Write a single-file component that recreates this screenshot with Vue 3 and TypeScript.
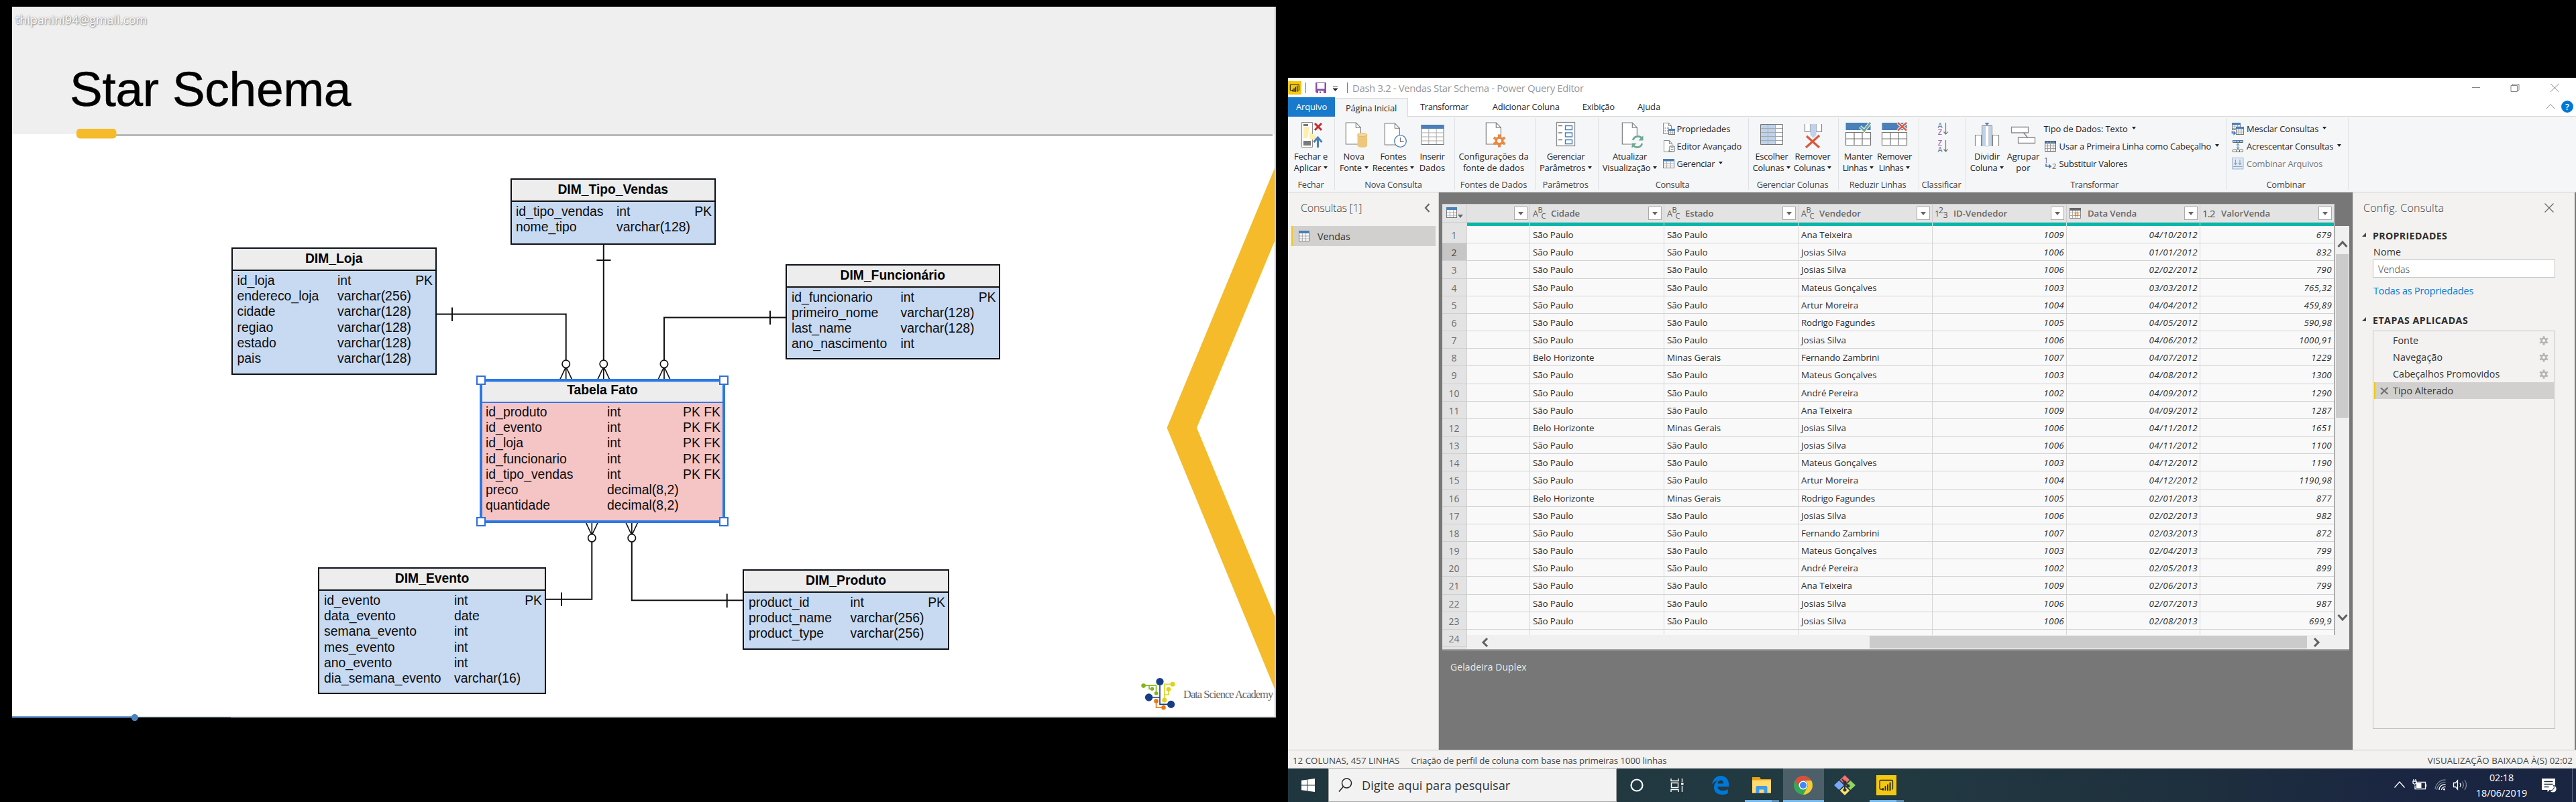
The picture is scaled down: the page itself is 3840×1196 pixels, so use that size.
<script setup lang="ts">
interface Field { name: string; type: string; key?: string }
interface Entity { title: string; x: number; y: number; w: number; h: number; col: number; pad: number; fact?: boolean; fields: Field[] }
interface Item { icon?: string; text: string; w: number; caret?: boolean; off?: boolean; iw?: number }
interface Btn { icon: string; w: number; ml: number; a: string; aw: number; b: string; bw: number; caret?: boolean }
interface Group { w: number; label: string; lw: number; lc: number; btns: Btn[]; items?: Item[]; iml?: number; sort?: boolean }

// Spreads the letters of a text so that it takes the given width.
const vFit = {
  mounted(el: HTMLElement, binding: { value?: number }) {
    const n = (el.textContent || '').length
    if (!binding.value || n < 2) return
    const natural = el.getBoundingClientRect().width
    el.style.letterSpacing = ((binding.value + 1.2 - natural) / n).toFixed(3) + 'px'
  },
}

const f = (name: string, type: string, key = ''): Field => ({ name, type, key })

const entities: Entity[] = [
  { title: 'DIM_Tipo_Vendas', x: 760.5, y: 266, w: 306.5, h: 98.5, col: 150, pad: 6.5, fields: [f('id_tipo_vendas', 'int', 'PK'), f('nome_tipo', 'varchar(128)')] },
  { title: 'DIM_Loja', x: 344.5, y: 369, w: 306.5, h: 189.5, col: 149.5, pad: 7, fields: [f('id_loja', 'int', 'PK'), f('endereco_loja', 'varchar(256)'), f('cidade', 'varchar(128)'), f('regiao', 'varchar(128)'), f('estado', 'varchar(128)'), f('pais', 'varchar(128)')] },
  { title: 'DIM_Funcionário', x: 1171, y: 393.5, w: 319.5, h: 142, col: 162.5, pad: 7, fields: [f('id_funcionario', 'int', 'PK'), f('primeiro_nome', 'varchar(128)'), f('last_name', 'varchar(128)'), f('ano_nascimento', 'int')] },
  { title: 'Tabela Fato', x: 715, y: 565, w: 366, h: 215, col: 181, pad: 5, fact: true, fields: [f('id_produto', 'int', 'PK FK'), f('id_evento', 'int', 'PK FK'), f('id_loja', 'int', 'PK FK'), f('id_funcionario', 'int', 'PK FK'), f('id_tipo_vendas', 'int', 'PK FK'), f('preco', 'decimal(8,2)'), f('quantidade', 'decimal(8,2)')] },
  { title: 'DIM_Evento', x: 474, y: 846, w: 340, h: 189, col: 194, pad: 7, fields: [f('id_evento', 'int', 'PK'), f('data_evento', 'date'), f('semana_evento', 'int'), f('mes_evento', 'int'), f('ano_evento', 'int'), f('dia_semana_evento', 'varchar(16)')] },
  { title: 'DIM_Produto', x: 1107, y: 849, w: 308, h: 120, col: 151.5, pad: 7, fields: [f('product_id', 'int', 'PK'), f('product_name', 'varchar(256)'), f('product_type', 'varchar(256)')] },
]
const handles = [[717, 567], [1079, 567], [717, 778], [1079, 778]]
const feetTop = [843.7, 899.8, 990]
const feetBottom = [882.3, 941.8]

const doc = '<path d="M1.5 2.5h17l8 9v31h-25z" fill="#fff" stroke="#7a7a7a" stroke-width="1.3"/><path d="M18.5 2.5v9h8" fill="none" stroke="#7a7a7a" stroke-width="1.3"/>'
const gear = (x: number, y: number, s: number, c: string) =>
  `<g transform="translate(${x} ${y}) scale(${s})"><g fill="${c}"><circle r="6.6"/>${[0, 60, 120, 180, 240, 300].map(a => `<rect x="-2" y="-9.6" width="4" height="5" transform="rotate(${a})"/>`).join('')}</g><circle r="3" fill="#f5f6f8"/></g>`
const sheet = (x: number, y: number, w: number, h: number, cols: number, rows: number, head: number) => {
  let s = `<rect x="${x + .5}" y="${y + .5}" width="${w - 1}" height="${h - 1}" fill="#fff" stroke="#777"/>`
  let d = ''
  for (let i = 1; i < cols; i++) d += `M${x + (w / cols) * i} ${y + head}v${h - head - 1}`
  for (let i = 1; i < rows; i++) d += `M${x + 1} ${y + head + ((h - head) / rows) * i}h${w - 2}`
  return s + `<path d="${d}" stroke="#a9a9a9" fill="none"/><rect x="${x}" y="${y}" width="${w}" height="${head}" fill="#4a7fb8"/>`
}
const docAt = (x: number, y: number) => `<g transform="translate(${x} ${y}) scale(.88 .8)">${doc}</g>`

// Large ribbon icons, on a 40 x 40 grid.
const big: Record<string, string> = {
  close: '<path d="M6.5 1.5h16v37h-16z" fill="#fff" stroke="#8a8a8a"/><path d="M9 8h9l-3 17H9z" fill="#ffefad"/><path d="M18 15l10 8v4h-10z" fill="#ffefad"/><path d="M9 4h7v3H9zM9 29h11v7H9z" fill="#7a7a7a"/><path d="M26 3l10 10M36 3l-10 10" stroke="#c8292e" stroke-width="3"/><path d="M30.500 39V26M24.500 31l6-7 6 7" fill="none" stroke="#4a7fb8" stroke-width="3"/>',
  source: docAt(7, 0) + '<path d="M25.500 20v16c0 4 14.500 4 14.500 0V20z" fill="#eec77c"/><ellipse cx="32.700" cy="20" rx="7.200" ry="2.600" fill="#f4d79f" stroke="#e2b560" stroke-width=".8"/>',
  recent: docAt(6, 1) + '<circle cx="30.500" cy="29.500" r="8.800" fill="#fff" stroke="#4a7fb8" stroke-width="1.300"/><path d="M30.500 24v6h5" fill="none" stroke="#777" stroke-width="1.300"/>',
  enter: sheet(3.500, 5, 34, 30, 3, 4, 6),
  config: docAt(7, 0) + gear(28, 29, 1, '#e88a42'),
  params: '<rect x="6.500" y="1.500" width="27" height="35" fill="#fff" stroke="#8a8a8a" stroke-width="1.300"/><path d="M9 6.500h6M9 17h6M9 27.500h6" stroke="#777" stroke-width="1.300"/><path d="M19.500 6.500h10v6h-10zM19.500 17h10v6h-10zM19.500 27.500h10v6h-10z" fill="#fff" stroke="#4a7fb8" stroke-width="1.400"/>',
  refresh: docAt(7, 0) + '<circle cx="31" cy="30.500" r="10" fill="#f5f6f8"/><path d="M24.300 28a7.500 7.500 0 0 1 13-3M37.800 33a7.500 7.500 0 0 1-13 3" fill="none" stroke="#6fa796" stroke-width="2.800"/><path d="M39.500 21v7.500h-7zM22.500 40v-7.500h7z" fill="#6fa796"/>',
  choose: '<path d="M3.500 4.500h33v30h-33z" fill="#fff"/><path d="M3.500 4.500h22v30h-22z" fill="#bfd2ea"/><path d="M14.500 5v29M25.500 5v29M4 10.500h32M4 16.500h32M4 22.500h32M4 28.500h32" stroke="#a5a9ae"/><path d="M3.500 4.500h33v30h-33z" fill="none" stroke="#777"/>',
  remcol: '<path d="M8.500 4v11.500h8V4M25.500 4v11.500h8V4" fill="#fff" stroke="#8a8a8a" stroke-width="1.200"/><path d="M16.500 4v16l4.500 5 4.500-5V4z" fill="#bfd2ea"/><path d="M11 22l19 17M30 21L10 39" stroke="#d9593c" stroke-width="3.200"/>',
  keep: '<path d="M1.500 2h37v11h-37z" fill="#4a7fb8"/><path d="M1.500 16.500h37v19h-37zM14 16.500v19M26 16.500v19M1.500 26h37" fill="#fff" stroke="#777" stroke-width="1.200"/><path d="M23 8l6 6L38 2" fill="none" stroke="#fff" stroke-width="5"/><path d="M23 8l6 6L38 2" fill="none" stroke="#6fa796" stroke-width="3"/>',
  remrow: '<path d="M1.500 2h37v11h-37z" fill="#4a7fb8"/><path d="M1.500 16.500h37v19h-37zM14 16.500v19M26 16.500v19M1.500 26h37" fill="#fff" stroke="#777" stroke-width="1.200"/><path d="M25 2l13 11.500M38 2L25 13.500" fill="none" stroke="#fff" stroke-width="4.500"/><path d="M25 2l13 11.500M38 2L25 13.500" fill="none" stroke="#d9593c" stroke-width="2.400"/>',
  split: '<path d="M2.500 37V20.500h9V37M28.500 37V20.500h9V37" fill="#fff" stroke="#8a8a8a" stroke-width="1.200"/><path d="M12.500 6.500h15V37h-15z" fill="#bfd2ea"/><path d="M17.500 6.500h5V37h-5z" fill="#fff" stroke="#bbb" stroke-width=".6"/><path d="M12.500 37V6.500h15V37" fill="none" stroke="#8a8a8a"/><path d="M16.500 2h7l-3.500 4z" fill="#4a7fb8"/>',
  group: '<path d="M2.500 8.500h25v8.500h-25zM12.500 24h25v8.500h-25z" fill="#fff" stroke="#8a8a8a" stroke-width="1.300"/><path d="M20.500 17l6 7" stroke="#777" stroke-width="1.200"/>',
}
// Small ribbon icons, on a 20 x 20 grid.
const small: Record<string, string> = {
  props: '<path d="M1.500 1.500h8l4 4v12h-12z" fill="#fff" stroke="#888"/><path d="M9.500 1.500v4h4" fill="none" stroke="#888"/><path d="M3.500 9h2M3.500 13h2M7 9h3M7 13h2" stroke="#666"/>' + sheet(9, 10, 10, 9, 3, 2, 3),
  editor: '<path d="M2.500 1.500h8l4 4.500v12.500h-12z" fill="#fff" stroke="#888"/><path d="M10.500 1.500v5h4" fill="none" stroke="#888"/><path d="M11 10h7v8h-8v-2h1z" fill="#fff" stroke="#666"/><path d="M13 12.500h3.500M13 15h3.500" stroke="#666"/>',
  table: sheet(1, 3, 17, 14, 3, 3, 3.500),
  header: '<path d="M1.500 2.500h16v15h-16z" fill="#fff" stroke="#666"/><path d="M1 2h17v4H1z" fill="#4a7fb8"/><path d="M5.500 2v15M9.500 2v15M13.500 2v15M2 6h15M2 9.700h15M2 13.400h15" stroke="#999"/><path d="M1.500 2.500h16v15h-16z" fill="none" stroke="#555"/>',
  replace: '<text x="0" y="8.500" font-size="11" fill="#666">1</text><text x="12" y="18" font-size="11" fill="#666">2</text><path d="M3 10v4h5" fill="none" stroke="#4a7fb8" stroke-width="1.700"/><path d="M7 10.500l4.500 3.500-4.500 3.500z" fill="#4a7fb8"/>',
  merge: sheet(1, 1, 13, 11, 3, 3, 3.500) + sheet(7, 7, 12, 12, 3, 3, 3.500) + '<path d="M1.500 13v3.500h3" fill="none" stroke="#4a7fb8" stroke-width="1.700"/><path d="M3.500 13l4 3.500-4 3.500z" fill="#4a7fb8"/>',
  append: '<path d="M2.500 1.500h15v3h-15zM2.500 15.500h15v3h-15zM7.500 15.500v3M12.500 15.500v3M7.500 1.500v3M12.500 1.500v3" fill="#fff" stroke="#666"/><path d="M2 1h16v2H2z" fill="#4a7fb8"/><path d="M10 6v8M8 8.500L10 6l2 2.500M8 11.500l2 2.500 2-2.500" fill="none" stroke="#4a7fb8"/>',
  combine: '<path d="M1.500 1.500h16.500v16.500h-16.500z" fill="#dfe9f5" stroke="#9fb2ce"/><path d="M6.500 4v7.500M4.500 9l2 2.500 2-2.500M13 4v7.500M11 9l2 2.500 2-2.500M3 14.500h13.500" fill="none" stroke="#8ba0c0" stroke-width="1.200"/>',
}

const btn = (icon: string, w: number, ml: number, a: string, aw: number, b: string, bw: number, caret = false): Btn => ({ icon, w, ml, a, aw, b, bw, caret })
const groups: Group[] = [
  { w: 70, label: 'Fechar', lw: 38, lc: 34, btns: [btn('close', 68, 0, 'Fechar e', 49, 'Aplicar', 39.500, true)] },
  { w: 179, label: 'Nova Consulta', lw: 84.500, lc: 87, btns: [btn('source', 49.500, 3.500, 'Nova', 30.500, 'Fonte', 31.500, true), btn('recent', 68, 0, 'Fontes', 38, 'Recentes', 51.500, true), btn('enter', 48, 0, 'Inserir', 36, 'Dados', 37.500)] },
  { w: 120, label: 'Fontes de Dados', lw: 98.500, lc: 57.500, btns: [btn('config', 110, 2.500, 'Configurações da', 103, 'fonte de dados', 90)] },
  { w: 94, label: 'Parâmetros', lw: 67, lc: 44.500, btns: [btn('params', 85, 2.500, 'Gerenciar', 55.500, 'Parâmetros', 67, true)] },
  { w: 224, label: 'Consulta', lw: 49.500, lc: 110, iml: 5, btns: [btn('refresh', 86, 3.500, 'Atualizar', 50, 'Visualização', 70.500, true)],
    items: [{ icon: 'props', text: 'Propriedades', w: 78.500 }, { icon: 'editor', text: 'Editor Avançado', w: 95.500 }, { icon: 'table', text: 'Gerenciar', w: 55.500, caret: true }] },
  { w: 134, label: 'Gerenciar Colunas', lw: 105.500, lc: 65, btns: [btn('choose', 60, 4, 'Escolher', 48, 'Colunas', 45.500, true), btn('remcol', 60, 1, 'Remover', 52, 'Colunas', 45.500, true)] },
  { w: 120, label: 'Reduzir Linhas', lw: 83.500, lc: 58, btns: [btn('keep', 54, 2, 'Manter', 41.500, 'Linhas', 35.500, true), btn('remrow', 54, 0, 'Remover', 51, 'Linhas', 35.500, true)] },
  { w: 70, label: 'Classificar', lw: 58, lc: 33, btns: [], sort: true },
  { w: 388, label: 'Transformar', lw: 70.500, lc: 191, iml: 5.500, btns: [btn('split', 56, 3, 'Dividir', 37, 'Coluna', 39.500, true), btn('group', 50, 1, 'Agrupar', 47.500, 'por', 20.500)],
    items: [{ text: 'Tipo de Dados: Texto', w: 124, caret: true }, { icon: 'header', text: 'Usar a Primeira Linha como Cabeçalho', w: 225.500, caret: true, iw: 23 }, { icon: 'replace', text: 'Substituir Valores', w: 100.500, iw: 23 }] },
  { w: 182, label: 'Combinar', lw: 57, lc: 88.500, iml: 7, btns: [],
    items: [{ icon: 'merge', text: 'Mesclar Consultas', w: 106, caret: true, iw: 23 }, { icon: 'append', text: 'Acrescentar Consultas', w: 128, caret: true, iw: 23 }, { icon: 'combine', text: 'Combinar Arquivos', w: 112, off: true, iw: 23 }] },
]

const tabs = [
  { t: 'Transformar', w: 70.500, ml: 18 }, { t: 'Adicionar Coluna', w: 98.800, ml: 36 },
  { t: 'Exibição', w: 47, ml: 34 }, { t: 'Ajuda', w: 33, ml: 34 },
]

const columns = [
  { k: '', t: '', w: 94, tw: 0 }, { k: 'abc', t: 'Cidade', w: 200, tw: 41.800 }, { k: 'abc', t: 'Estado', w: 200, tw: 41.300 },
  { k: 'abc', t: 'Vendedor', w: 200, tw: 60.700 }, { k: '123', t: 'ID-Vendedor', w: 200, tw: 79 },
  { k: 'date', t: 'Data Venda', w: 199, tw: 72 }, { k: '1.2', t: 'ValorVenda', w: 200, tw: 72 },
]
const widths: Record<string, number> = {
  'São Paulo': 59.200, 'Belo Horizonte': 90.300, 'Minas Gerais': 79, 'Ana Teixeira': 74.700, 'Josias Silva': 65.800,
  'Mateus Gonçalves': 111.300, 'Artur Moreira': 84, 'Rodrigo Fagundes': 108.700, 'Fernando Zambrini': 115, 'André Pereira': 83.700,
}
const numWidth = (s: string) => [...s].reduce((n, c) => n + (c === ',' ? 3.400 : c === '/' ? 5.900 : 7.500), 0) - .5
const A = 'Ana Teixeira', J = 'Josias Silva', M = 'Mateus Gonçalves', R = 'Artur Moreira', G = 'Rodrigo Fagundes', F = 'Fernando Zambrini', P = 'André Pereira'
const ids: Record<string, string> = { [A]: '1009', [J]: '1006', [M]: '1003', [R]: '1004', [G]: '1005', [F]: '1007', [P]: '1002' }
const sales: [string, string, string, boolean?][] = [
  [A, '04/10/2012', '679'], [J, '01/01/2012', '832'], [J, '02/02/2012', '790'], [M, '03/03/2012', '765,32'], [R, '04/04/2012', '459,89'],
  [G, '04/05/2012', '590,98'], [J, '04/06/2012', '1000,91'], [F, '04/07/2012', '1229', true], [M, '04/08/2012', '1300'], [P, '04/09/2012', '1290'],
  [A, '04/09/2012', '1287'], [J, '04/11/2012', '1651', true], [J, '04/11/2012', '1100'], [M, '04/12/2012', '1190'], [R, '04/12/2012', '1190,98'],
  [G, '02/01/2013', '877', true], [J, '02/02/2013', '982'], [F, '02/03/2013', '872'], [M, '02/04/2013', '799'], [P, '02/05/2013', '899'],
  [A, '02/06/2013', '799'], [J, '02/07/2013', '987'], [J, '02/08/2013', '699,9'],
]
const rows = sales.map(([who, date, value, bh]) => ({
  text: [bh ? 'Belo Horizonte' : 'São Paulo', bh ? 'Minas Gerais' : 'São Paulo', who],
  num: [ids[who], date, value],
}))
const steps = [{ t: 'Fonte', w: 37 }, { t: 'Navegação', w: 73 }, { t: 'Cabeçalhos Promovidos', w: 158 }, { t: 'Tipo Alterado', w: 89, on: true }]
const gearPath = gear(0, 0, .7, '#b4b4b4')
const miniTable = sheet(0, 0, 16, 16, 3, 3, 4)
</script>

<template>
  <div class="desk">
    <section class="left">
      <div class="slide">
        <header class="head">
          <span class="mail" v-fit="195">thipanini94@gmail.com</span>
          <h1 v-fit="418">Star Schema</h1>
        </header>
        <svg class="art" viewBox="18 10 1884 1062" width="1884" height="1062">
          <path d="M173 201.300H1897" stroke="#808080" stroke-width="1.800" />
          <rect x="114" y="192" width="59.500" height="14.500" rx="5" fill="#f5bb2b" />
          <path d="M1900 251L1739.500 638 1900 1027V918.500L1784 638 1900 360z" fill="#f5bb2b" />
          <path d="M1901 10V1070" stroke="#c9c9c9" stroke-width="2" />
          <path d="M18 1069.300H1902" stroke="#d3dbdb" stroke-width="1.500" />
          <path d="M18 1069.500H200" stroke="#4a7ebb" stroke-width="2.500" />
          <path d="M200 1069.500H344" stroke="#6f93a8" stroke-width="1.200" />
          <ellipse cx="200.800" cy="1070" rx="5" ry="5.200" fill="#4f81bd" />
          <g fill="none" stroke="#111" stroke-width="2">
            <path d="M650 468.500H843.700V537M674 458.500V479" />
            <path d="M899.800 364V537M889.300 388H910.500" />
            <path d="M1172 473.500H990V537M1148 463.500V484" />
            <path d="M813 893.800H882.300V808M837 883.500V904" />
            <path d="M1108 895.300H941.800V808M1083.700 885.500V906" />
            <g v-for="x in feetTop" :key="x" stroke-width="1.700">
              <circle :cx="x" cy="542.800" r="5.700" fill="#fff" />
              <path :d="`M${x} 549V566M${x - 1} 549L${x - 9} 566M${x + 1} 549L${x + 9} 566`" />
            </g>
            <g v-for="x in feetBottom" :key="x" stroke-width="1.700">
              <circle :cx="x" cy="802.300" r="5.700" fill="#fff" />
              <path :d="`M${x} 796V779M${x - 1} 796L${x - 9} 779M${x + 1} 796L${x + 9} 779`" />
            </g>
          </g>
          <g fill="none" stroke-width="1.600">
            <path d="M1729 1016V1050.400H1745M1712 1040H1729" stroke="#173e84" />
            <path d="M1704.600 1022.300H1723.500V1034M1713 1022V1027.500H1718" stroke="#83b51c" />
            <path d="M1748 1020.300H1736V1044M1742 1028V1036H1736" stroke="#dcd416" />
            <path d="M1723.500 1045.400V1055.300H1734" stroke="#ee750b" />
          </g>
          <g fill="#173e84"><circle cx="1729" cy="1016.500" r="5.600" /><circle cx="1712.600" cy="1040" r="5.700" /><circle cx="1745.600" cy="1050.400" r="5.600" /></g>
          <g fill="#83b51c"><circle cx="1704.600" cy="1022.600" r="3.300" /><circle cx="1717.500" cy="1027.200" r="2.800" /><circle cx="1723.500" cy="1034" r="2.800" /></g>
          <g fill="#dcd416"><circle cx="1748" cy="1020.300" r="3.500" /><circle cx="1742" cy="1028" r="3.300" /><circle cx="1735.800" cy="1044" r="3.500" /></g>
          <g fill="#ee750b"><circle cx="1723.500" cy="1045.400" r="3.200" /><circle cx="1734.500" cy="1055.300" r="3.200" /></g>
        </svg>
        <article v-for="e in entities" :key="e.title" class="entity" :class="{ fact: e.fact }"
          :style="{ left: e.x - 18 + 'px', top: e.y - 10 + 'px', width: e.w + 'px', height: e.h + 'px' }">
          <h2>{{ e.title }}</h2>
          <div class="fields" :style="{ paddingLeft: e.pad + 'px' }">
            <div v-for="r in e.fields" :key="r.name" class="field">
              <span :style="{ width: e.col + 'px' }">{{ r.name }}</span><span>{{ r.type }}</span><span class="key">{{ r.key }}</span>
            </div>
          </div>
        </article>
        <i v-for="h in handles" :key="h.join()" class="handle" :style="{ left: h[0] - 25 + 'px', top: h[1] - 17 + 'px' }"></i>
        <span class="brand" v-fit="132">Data Science Academy</span>
      </div>
    </section>

    <section class="window">
      <div class="titlebar">
        <svg class="pbi" width="20" height="20" viewBox="0 0 30 30"><rect width="30" height="30" fill="#f2c811" /><path d="M9 21H6.500a1.500 1.500 0 0 1-1.500-1.500V9a1.500 1.500 0 0 1 1.500-1.500h16.500A1.500 1.500 0 0 1 24.500 9v10.500A1.500 1.500 0 0 1 23 21" fill="none" stroke="#222" stroke-width="1.600" /><path d="M10 20v2M13.500 17v6M17 14v9M20.500 11v12" stroke="#222" stroke-width="2.200" stroke-linecap="round" /></svg>
        <i class="bar b1"></i>
        <svg class="save" width="16" height="16" viewBox="0 0 16 16"><path d="M0 0h16v16H2l-2-2z" fill="#8a50a5" /><path d="M2.500 1h11v8.500h-11zM4 12.500h8V16H4z" fill="#fff" /><path d="M6 13.500h2V16H6z" fill="#8a50a5" /></svg>
        <svg class="drop" width="7" height="8" viewBox="0 0 7 8"><path d="M0 1h7M0 4h7l-3.500 3.500z" stroke="#333" stroke-width=".8" fill="#222" /></svg>
        <i class="bar b2"></i>
        <span class="wtitle" v-fit="343.500">Dash 3.2 - Vendas Star Schema - Power Query Editor</span>
        <svg class="ctl" width="135" height="20" viewBox="3682 120 135 20" fill="none" stroke="#868686"><path d="M3685 129.500h12M3743 126.500h9.500v9h-9.500zM3745.500 126.500v-2h9.500v9h-2.500M3802 124l12.500 12M3814.500 124l-12.500 12" /></svg>
      </div>
      <nav class="tabs">
        <span class="tab file"><b class="t" v-fit="45">Arquivo</b></span>
        <span class="tab on"><b class="t" v-fit="75">Página Inicial</b></span>
        <b v-for="t in tabs" :key="t.t" class="t" :style="{ marginLeft: t.ml + 'px' }" v-fit="t.w">{{ t.t }}</b>
        <svg class="up" width="14" height="10" viewBox="0 0 14 10" fill="none" stroke="#8a8a8a"><path d="M1 8l6-6.500L13 8" /></svg>
        <span class="help">?</span>
      </nav>
      <div class="ribbon">
        <div v-for="g in groups" :key="g.label" class="group" :style="{ width: g.w + 'px' }">
          <div class="gbody">
            <div v-for="b in g.btns" :key="b.icon" class="btn" :style="{ width: b.w + 'px', marginLeft: b.ml + 'px' }">
              <svg width="40" height="40" viewBox="0 0 40 40" v-html="big[b.icon]"></svg>
              <span class="line"><span v-fit="b.aw">{{ b.a }}</span></span>
              <span class="line"><span v-fit="b.bw">{{ b.b }}</span><i v-if="b.caret" class="caret"></i></span>
            </div>
            <div v-if="g.sort" class="sort">
              <svg width="18" height="46" viewBox="0 0 18 46"><g font-size="11" text-anchor="middle"><text x="5" y="9" fill="#4a7fb8">A</text><text x="5" y="19" fill="#8a50a5">Z</text><text x="5" y="35" fill="#8a50a5">Z</text><text x="5" y="45" fill="#4a7fb8">A</text></g><path d="M13.500 1v17M10.500 14.500l3 3.500 3-3.500M13.500 27v17M10.500 40.500l3 3.500 3-3.500" fill="none" stroke="#777" stroke-width="1.200" /></svg>
            </div>
            <div v-if="g.items" class="items" :style="{ marginLeft: g.iml + 'px' }">
              <div v-for="s in g.items" :key="s.text" class="item" :class="{ off: s.off }">
                <span v-if="s.icon" class="sicon" :style="{ width: (s.iw || 22) + 'px' }"><svg width="20" height="20" viewBox="0 0 20 20" v-html="small[s.icon]"></svg></span>
                <span v-fit="s.w">{{ s.text }}</span><i v-if="s.caret" class="caret"></i>
              </div>
            </div>
          </div>
          <div class="glabel" :style="{ width: g.lc * 2 + 'px' }"><span v-fit="g.lw">{{ g.label }}</span></div>
        </div>
      </div>

      <div class="main">
        <aside class="queries">
          <div class="qhead"><span v-fit="90">Consultas [1]</span><svg width="9" height="14" viewBox="0 0 9 14"><path d="M7.500 1L2 7l5.500 6" fill="none" stroke="#666" stroke-width="2.200" /></svg></div>
          <div class="query"><svg width="16" height="16" viewBox="0 0 16 16" v-html="miniTable"></svg><span v-fit="47.500">Vendas</span></div>
        </aside>
        <div class="center">
          <div class="grid">
            <div class="ghead">
              <div class="corner"><svg width="26" height="18" viewBox="0 0 26 18"><g v-html="miniTable"></g><path d="M17 11h8l-4 5z" fill="#666" /></svg></div>
              <div v-for="c in columns" :key="c.t" class="hcell" :style="{ width: c.w + 'px' }">
                <svg v-if="c.k === 'abc'" class="kind" width="20" height="20" viewBox="0 0 20 20" fill="#555" font-size="11"><text x="0" y="14.500" font-size="12.500">A</text><text x="7.500" y="9">B</text><text x="12.500" y="18">C</text></svg>
                <svg v-else-if="c.k === '123'" class="kind" width="20" height="20" viewBox="0 0 20 20" fill="#555" font-size="12.500"><text x="-1" y="14.500">1</text><text x="4.800" y="10">2</text><text x="11.500" y="17">3</text></svg>
                <svg v-else-if="c.k === 'date'" class="kind" width="20" height="20" viewBox="0 0 20 20"><path d="M.5 3.500h16v14H.5z" fill="#fff" stroke="#888" /><path d="M0 2h17v4H0z" fill="#666" /><path d="M4.500 6v11M8.500 6v11M12.500 6v11M1 9.500h15M1 13.500h15" stroke="#aaa" /><path d="M8.500 9.500h4v4h-4z" fill="#fff" stroke="#e07b1c" stroke-width="1.500" /></svg>
                <svg v-else-if="c.k === '1.2'" class="kind" width="20" height="20" viewBox="0 0 20 20" fill="#555" font-size="15"><text x="-1" y="15.500" textLength="19.500">1.2</text></svg>
                <b v-if="c.t" v-fit="c.tw">{{ c.t }}</b>
                <span class="filter"><i></i></span>
              </div>
            </div>
            <div class="quality"><i class="qn"></i><i v-for="c in columns" :key="c.t" :style="{ width: c.w + 'px' }"></i></div>
            <div class="gbot">
              <div class="nums"><div v-for="i in 24" :key="i" class="num" :class="{ cur: i === 2 }">{{ i }}</div></div>
              <div class="gright">
                <div class="scrollrow">
                  <div class="cells">
                    <div v-for="(r, i) in rows" :key="i" class="row">
                      <div class="cell c0"></div>
                      <div v-for="(t, j) in r.text" :key="j" class="cell"><span v-fit="widths[t]">{{ t }}</span></div>
                      <div v-for="(t, j) in r.num" :key="j" class="cell n" :class="{ d: j === 1 }"><span v-fit="numWidth(t)">{{ t }}</span></div>
                    </div>
                    <div class="row"><div class="cell c0"></div><div v-for="j in 6" :key="j" class="cell" :class="{ d: j === 5 }"></div></div>
                  </div>
                  <div class="vbar">
                    <svg width="16" height="12" viewBox="0 0 16 12"><path d="M1.500 10L8 3l6.500 7" fill="none" stroke="#606060" stroke-width="3" /></svg>
                    <i></i>
                    <svg class="dn" width="16" height="12" viewBox="0 0 16 12"><path d="M1.500 2L8 9l6.500-7" fill="none" stroke="#606060" stroke-width="3" /></svg>
                  </div>
                </div>
                <div class="hbar">
                  <svg width="12" height="14" viewBox="0 0 12 14"><path d="M10 1L4 7l6 6" fill="none" stroke="#606060" stroke-width="3" /></svg>
                  <i></i>
                  <svg width="12" height="14" viewBox="0 0 12 14"><path d="M2 1l6 6-6 6" fill="none" stroke="#606060" stroke-width="3" /></svg>
                </div>
              </div>
            </div>
          </div>
          <p class="preview"><span v-fit="112.500">Geladeira Duplex</span></p>
        </div>
        <aside class="config">
          <div class="chead"><span v-fit="119">Config. Consulta</span><svg width="14" height="14" viewBox="0 0 14 14"><path d="M.5.5l13 13M13.500.5l-13 13" stroke="#666" stroke-width="1.200" /></svg></div>
          <div class="sect s1"><i></i><b v-fit="110">PROPRIEDADES</b></div>
          <div class="lab"><span v-fit="40">Nome</span></div>
          <div class="input"><span v-fit="46">Vendas</span></div>
          <div class="link"><span v-fit="148">Todas as Propriedades</span></div>
          <div class="sect s2"><i></i><b v-fit="141">ETAPAS APLICADAS</b></div>
          <div class="steps">
            <div v-for="s in steps" :key="s.t" class="step" :class="{ on: s.on }">
              <svg v-if="s.on" class="x" width="13" height="12" viewBox="0 0 13 12"><path d="M1 1.500l10.500 9M11.500 1L1 11" stroke="#6a6a6a" stroke-width="2" /></svg>
              <span v-fit="s.w">{{ s.t }}</span>
              <svg v-if="!s.on" class="gear" width="14" height="14" viewBox="-7 -7 14 14" v-html="gearPath"></svg>
            </div>
          </div>
        </aside>
      </div>

      <footer class="status">
        <span v-fit="158">12 COLUNAS, 457 LINHAS</span><span class="s2" v-fit="380">Criação de perfil de coluna com base nas primeiras 1000 linhas</span>
        <span class="s3" v-fit="215">VISUALIZAÇÃO BAIXADA À(S) 02:02</span>
      </footer>

      <div class="taskbar">
        <div class="start"><svg width="20" height="20" viewBox="0 0 20 20"><path d="M0 2.800l8.200-1.100v7.800H0zM9.200 1.500L20 0v9.500H9.200zM0 10.500h8.200v7.800L0 17.200zM9.200 10.500H20V20L9.200 18.500z" fill="#fff" /></svg></div>
        <div class="search"><svg width="21" height="22" viewBox="0 0 21 22"><circle cx="12.500" cy="8" r="7" fill="none" stroke="#222" stroke-width="1.500" /><path d="M7.500 13L1 20.500" stroke="#222" stroke-width="1.600" /></svg><span v-fit="220">Digite aqui para pesquisar</span></div>
        <div class="app sys"><svg width="20" height="20" viewBox="0 0 20 20"><circle cx="10" cy="10" r="8.500" fill="none" stroke="#fff" stroke-width="2.200" /></svg></div>
        <div class="app sys"><svg width="20" height="20" viewBox="0 0 20 20" fill="none" stroke="#fff" stroke-width="1.400"><path d="M1 0v3.500h11V0M1 20v-3.500h11V20M1.500 6.500h10v7h-10zM17.500 0v5M17.500 11v9" /><path d="M16 6.500h3.500v3H16z" fill="#fff" stroke="none" /></svg></div>
        <div class="app first"><svg width="25" height="28" viewBox="0 0 25 28"><path d="M0 12.500C1.500 4.500 6.500 0 13 0c8 0 12 6 12 12.500V16H8.300c.3 4 3.700 6 7.700 6 3 0 5.500-.8 7.700-2.100v6c-2.400 1.400-5.400 2.100-8.700 2.100C7.500 28 3 23.500 3 17.300c0-4.500 2.500-8.300 6.300-10.300C5.500 7.600 2 9.500 0 12.500zM8.500 11.500h8.800c0-3-1.600-5-4.300-5-2.600 0-4.200 2.200-4.500 5z" fill="#0078d7" /></svg></div>
        <div class="app open two"><svg width="28" height="24" viewBox="0 0 28 24"><path d="M0 0h11l2 3h15v21H0z" fill="#e8a413" /><path d="M1 4.500h27V23H0V4.500z" fill="#ffdb70" /><path d="M5.500 24V15a2 2 0 0 1 2-2h13a2 2 0 0 1 2 2v9h-5v-5.500h-7V24z" fill="#3f9be8" /></svg></div>
        <div class="app open live"><svg width="28" height="28" viewBox="-14 -14 28 28"><circle r="14" fill="#34a853" /><path d="M-12.100-7A14 14 0 0 1 12.100-7H0A7 7 0 0 0-6.100 3.500z" fill="#e04a3f" /><path d="M12.100-7A14 14 0 0 1 0 14L6.100 3.500A7 7 0 0 0 0-7z" fill="#fbc935" /><circle r="6.500" fill="#fff" /><circle r="5" fill="#4486f4" /></svg></div>
        <div class="app"><svg width="32" height="30" viewBox="-16 -15 32 30"><path d="M0-15L7.200-8 0-1-7.200-8z" fill="#f27373" /><path d="M8.500-7L16 0 8.500 7 1.300 0z" fill="#8fd663" /><path d="M0 1.200L7.200 8 0 15-7.200 8z" fill="#ffe16b" /><path d="M-8.500-7L-1.300 0-8.500 7-16 0z" fill="#7aa9f7" /><path d="M-4-9L5 1M0-4V8" stroke="#2a3238" stroke-width="2" /><circle cx="0" cy="-4.500" r="2.500" fill="#2a3238" /><circle cx="5" cy="1" r="2.500" fill="#2a3238" /><circle cx="0" cy="7" r="2.500" fill="#2a3238" /></svg></div>
        <div class="app open two"><svg width="30" height="30" viewBox="0 0 30 30"><rect width="30" height="30" fill="#f2c811" /><path d="M9 21H6.500a1.500 1.500 0 0 1-1.500-1.500V9a1.500 1.500 0 0 1 1.500-1.500h16.500A1.500 1.500 0 0 1 24.500 9v10.500A1.500 1.500 0 0 1 23 21" fill="none" stroke="#222" stroke-width="1.300" /><path d="M10 20v2M13.500 17v5M17 14.500v8M20.500 11.500v11" stroke="#222" stroke-width="1.900" stroke-linecap="round" /></svg></div>
        <svg class="tray" width="112" height="20" viewBox="3568 1162 112 20" fill="none" stroke="#fff" stroke-width="1.300">
          <path d="M3569.500 1175.500l7.500-8.500 7.500 8.500" />
          <path d="M3601 1167.500h14.500v10H3600v-5M3616.500 1170.500v4M3598 1163v3M3601 1163v3M3597 1166h5v3l-2.500 1.500-2.500-1.500z" /><path d="M3602 1169h7.500v7h-7.500z" fill="#fff" stroke="none" />
          <path d="M3636 1179a8 8 0 0 1 9.500-8M3639.500 1179a5 5 0 0 1 6-4.500" /><path d="M3632.500 1179a12 12 0 0 1 13-11.500M3630 1178a15 15 0 0 1 15.500-14" stroke="#73828c" /><circle cx="3643.500" cy="1178" r="1.500" fill="#fff" stroke="none" />
          <path d="M3657.500 1168.500h3l3-3.500v13l-3-3.500h-3zM3667 1169q2 2.500 0 5.500" /><path d="M3670.500 1166.500q3.500 5 0 10M3674 1164q5 7.500 0 15" stroke="#73828c" />
        </svg>
        <div class="clock"><span v-fit="35">02:18</span><span v-fit="75.500">18/06/2019</span></div>
        <svg class="note" width="22" height="21" viewBox="0 0 22 21"><path d="M0 0h20v17h-8l-3.500 3v-3H0z" fill="#fff" /><path d="M3.500 4.500h13M3.500 8.500h13M3.500 12.500h7" stroke="#1c2942" stroke-width="1.300" /><path d="M17.500 10a5.500 5.500 0 1 1-6 7.500 5 5 0 0 0 6-7.500z" fill="#fff" stroke="#1c2942" /></svg>
        <i class="peek"></i>
      </div>
    </section>
  </div>
</template>

<style>
html, body { margin: 0; background: #000; }
</style>

<style scoped>
* { box-sizing: border-box; }
.desk { width: 3840px; height: 1196px; background: #000; display: flex; overflow: hidden; font-family: "Open Sans", "Noto Sans", sans-serif; }
.desk span, .desk b, .desk h1, .desk h2 { white-space: nowrap; }
.desk svg { flex: none; display: block; overflow: visible; }
.left { width: 1920px; padding: 10px 0 0 18px; flex: none; }
.slide { position: relative; width: 1884px; height: 1060px; background: #fff; font-family: "Liberation Sans", Arial, sans-serif; color: #000; }
.head { height: 190px; background: #efefef; display: flex; flex-direction: column; align-items: flex-start; }
.mail { font: 17.500px/22px "Open Sans", sans-serif; color: #fff; margin: 8px 0 0 5px; text-shadow: 0 0 2px #777, 1px 1px 2px #999; }
h1 { font-weight: 400; font-size: 73px; line-height: 84px; margin: 51px 0 0 86px; -webkit-text-stroke: .5px #000; }
.art { position: absolute; left: 0; top: 0; }
.entity { position: absolute; border: 2px solid #0c1018; background: #c8daf2; display: flex; flex-direction: column; }
.entity h2 { margin: 0; height: 33px; border-bottom: 2px solid #111; background: #ededed; text-align: center; font-size: 19.300px; line-height: 29px; font-weight: 700; flex: none; }
.fields { padding: 3px 4px 0 7px; }
.field { display: flex; height: 23.200px; font-size: 19.400px; line-height: 23px; color: #0c0c0c; }
.key { margin-left: auto; }
.fact { background: #f5c5c5; border: 4px solid #2a78e4; }
.fact h2 { height: 32px; line-height: 25px; border-bottom: 2.500px solid #3a76e6; box-shadow: inset 0 1px #9cc4f4; }
.fact .fields { padding-right: 3px; padding-top: 2px; }
.handle { position: absolute; width: 14px; height: 14px; background: #fff; border: 2px solid #2f6fdc; }
.brand { position: absolute; left: 1746px; top: 1014px; font: 16.500px/24px "Liberation Serif", serif; color: #666; }

.window { width: 1920px; padding-top: 116px; display: flex; flex-direction: column; flex: none; }
.titlebar { height: 29px; background: #fff; display: flex; align-items: center; flex: none; }
.bar { width: 1px; height: 16px; background: #777; }
.b1 { margin-left: 6px; }
.save { margin-left: 14px; }
.drop { margin-left: 10px; margin-top: 2px; }
.b2 { margin-left: 14px; }
.wtitle { margin-left: 7px; font-size: 14.900px; color: #999; }
.ctl { margin-left: auto; margin-right: 23px; }
.tabs { height: 29px; background: #fff; border-bottom: 1px solid #d8d8d8; display: flex; align-items: center; font-size: 13px; color: #2b2b2b; flex: none; }
.tabs .t { font-weight: 400; }
.tab { height: 29px; display: flex; align-items: center; }
.file { width: 70px; background: #1979ca; color: #fff; justify-content: center; }
.on.tab { width: 109px; justify-content: center; border: 1px solid #d8d8d8; border-left: 0; border-bottom: 0; background: #f5f6f8; position: relative; top: 1px; }
.up { margin-left: auto; margin-right: 9px; }
.help { width: 18px; height: 18px; border-radius: 9px; background: #0078d7; color: #fff; font-size: 13px; font-weight: 600; line-height: 18px; text-align: center; margin-right: 4px; }
.ribbon { height: 113px; background: #f5f6f8; border-bottom: 1px solid #d2d2d2; display: flex; padding-top: 2px; font-size: 12.900px; color: #222; flex: none; }
.group { height: 107px; border-right: 1px solid #dfe1e4; flex: none; }
.gbody { height: 91px; display: flex; }
.btn { flex: none; display: flex; flex-direction: column; align-items: center; padding-top: 5px; }
.btn svg { margin-bottom: 4px; }
.line { height: 17px; line-height: 17px; display: flex; }
.caret { width: 0; height: 0; border: 3.500px solid transparent; border-top: 4px solid #222; border-bottom: 0; margin: 6px 0 0 4px; flex: none; }
.glabel { height: 17px; line-height: 17px; text-align: center; color: #444; }
.glabel span { display: inline-block; }
.items { padding-top: 3px; }
.item { height: 26px; display: flex; align-items: center; }
.item .caret { margin: -3px 0 0 6px; }
.off { color: #777; }
.sort { padding: 6px 0 0 26px; }

.main { height: 831px; display: flex; background: #777; flex: none; }
.queries { width: 225px; background: #f3f2f0; border-right: 1px solid #d0d0d0; flex: none; }
.qhead { height: 50px; display: flex; align-items: center; justify-content: space-between; padding: 0 12px 5px 19px; font-size: 16.200px; font-weight: 300; color: #444; }
.query { height: 30px; margin: 0 4px 0 5px; background: #d1d0ce; border-left: 2px solid #f2c811; display: flex; align-items: center; padding-left: 9px; gap: 12px; font-size: 14.300px; color: #333; }
.center { width: 1362px; padding: 17px 0 0 5px; flex: none; }
.grid { width: 1352px; height: 666px; border-bottom: 2px solid #a5a5a5; }
.ghead { height: 28px; width: 1330px; background: #e3e3e3; border-top: 1px solid #ccc; border-bottom: 1px solid #cfcfcf; display: flex; }
.corner { width: 37px; border-right: 1px solid #d0d0d0; display: flex; align-items: center; padding-left: 6px; flex: none; }
.hcell { border-right: 1px solid #cdcdcd; display: flex; align-items: center; padding: 0 3px 0 4px; flex: none; font-size: 13.200px; color: #666; }
.hcell b { margin-left: 7px; font-weight: 600; }
.filter { margin-left: auto; width: 20px; height: 20px; background: #fff; border: 1px solid #ababab; display: flex; align-items: center; justify-content: center; flex: none; }
.filter i { border: 4.500px solid transparent; border-top: 5px solid #666; border-bottom: 0; }
.quality { height: 5px; display: flex; width: 1330px; }
.quality i { background: #01b8aa; border-right: 1px solid #ddd; flex: none; }
.quality .qn { width: 37px; background: #e3e3e3; }
.gbot { height: 631px; display: flex; }
.nums { width: 37px; overflow: hidden; flex: none; background: #e3e3e3; }
.num { height: 26.180px; line-height: 27px; border-right: 1px solid #d0d0d0; border-bottom: 1px solid #cfcfcf; text-align: center; font-size: 14px; color: #6a6a6a; padding-right: 1px; }
.cur { background: #c6c6c6; color: #444; }
.gright { width: 1315px; flex: none; }
.scrollrow { height: 610px; display: flex; overflow: hidden; }
.cells { width: 1293px; flex: none; }
.row { height: 26.180px; display: flex; background: #f9f9f9; border-bottom: 1px solid #d2d2d2; }
.cell { width: 200px; border-right: 1px solid #d6d6d6; padding: 0 4px; font-size: 13.400px; line-height: 27px; color: #2c2c2c; flex: none; }
.cell span { display: inline-block; }
.c0 { width: 94px; }
.n { text-align: right; font-style: italic; padding-right: 3px; }
.d { width: 199px; }
.vbar { width: 22px; margin-left: 0; background: #f0f0f0; border-left: 1px solid #888; display: flex; flex-direction: column; align-items: center; padding-top: 21px; flex: none; }
.vbar i { width: 19px; height: 244px; background: #cbcbcb; margin-top: 9px; flex: none; }
.dn { margin-top: 292px; }
.hbar { height: 21px; background: #f0f0f0; display: flex; align-items: center; padding-left: 20px; width: 1315px; }
.hbar i { width: 652px; height: 19px; background: #cbcbcb; margin-left: 568px; margin-right: 9px; flex: none; }
.preview { margin: 0; padding: 14px 0 0 12px; color: #ececec; font-size: 13.800px; line-height: 22px; }
.preview span { display: inline-block; }
.config { width: 331px; background: #f3f2f0; border-left: 1px solid #ddd; color: #333; flex: none; font-size: 14.300px; }
.chead { height: 46px; display: flex; align-items: center; justify-content: space-between; padding: 0 31px 0 15px; font-size: 16.200px; font-weight: 300; color: #444; }
.chead svg { margin-top: -1px; }
.sect { display: flex; align-items: center; padding-left: 13px; height: 20px; font-size: 14.200px; color: #2d2d2d; }
.sect i { border: 3.500px solid transparent; border-right-color: #444; border-bottom-color: #444; margin-right: 10px; margin-top: -3px; }
.s1.sect { margin-top: 8px; }
.lab { height: 20px; line-height: 20px; margin: 5px 0 1px 30px; }
.input { margin-left: 29px; width: 272px; height: 27px; border: 1px solid #bfc1c4; background: #fff; padding-left: 7px; line-height: 27px; font-weight: 300; }
.link { height: 20px; line-height: 20px; margin: 10px 0 0 30px; color: #0078d7; }
.lab span, .input span, .link span { display: inline-block; }
.s2.sect { margin-top: 23px; }
.steps { margin: 6px 0 0 29px; width: 272px; height: 594px; border: 1px solid #c2c2c2; padding: 1px 1px; }
.step { height: 25px; display: flex; align-items: center; padding-left: 28px; padding-right: 8px; position: relative; }
.step.on { background: #d1d0ce; border-left: 2px solid #f2c811; padding-left: 7px; }
.step .x { margin-right: 6px; }
.gear { margin-left: auto; }
.status { height: 28px; background: #f3f2f0; border-top: 1px solid #c8c8c8; display: flex; align-items: center; padding: 2px 5px 0 7px; font-size: 13.300px; color: #444; flex: none; }
.status .s2 { margin-left: 17px; }
.status .s3 { margin-left: auto; }
.taskbar { height: 50px; display: flex; align-items: center; background: linear-gradient(90deg, #20363f 0, #223a42 45%, #1e2f3d 70%, #1a2542 88%); flex: none; }
.start { width: 60px; padding-left: 20px; }
.search { width: 430px; height: 50px; background: #f2f2f2; border: 1px solid #a6a6a6; display: flex; align-items: center; padding-left: 14px; gap: 14px; font-size: 18.200px; color: #333; }
.app { width: 61px; height: 50px; display: flex; align-items: center; justify-content: center; position: relative; margin-right: 1px; }
.app.sys { width: 60px; margin-right: 0; }
.first { margin-left: 3.500px; }
.open::after { content: ""; position: absolute; left: 5px; right: 5px; bottom: 0; height: 3px; background: #76b9ed; }
.two::after { background: linear-gradient(90deg, #76b9ed 40px, #5b8cb1 40px); }
.live { background: #4d5f68; }
.live::after { left: 0; right: 0; background: #76b9ed; }
.tray { margin-left: auto; }
.clock { display: flex; flex-direction: column; align-items: center; width: 78px; margin-left: 10px; color: #fff; font-size: 14.400px; line-height: 23px; }
.note { margin-left: 21px; }
.peek { width: 1px; height: 50px; background: #5b6680; margin: 0 5px 0 23px; }
</style>
